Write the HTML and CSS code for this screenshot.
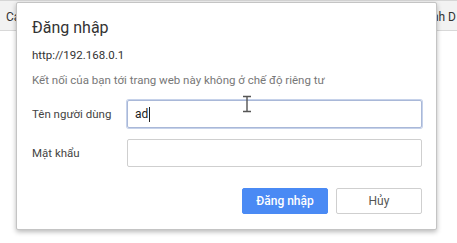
FILE: index.html
```html
<!DOCTYPE html>
<html lang="vi">

<head>
  <meta charset="utf8">
  <title>Đăng nhập</title>
  <link rel="stylesheet" href="styles.css">
</head>

<body>

  <div class="browser">
    <div class="tabbar">
      <span class="tab-left">Ca</span>
      <span class="tab-right">nh D</span>
    </div>
    <div class="page"></div>
  </div>

  <div class="auth-dialog">
    <h1 class="title">Đăng nhập</h1>
    <div class="origin">http://192.168.0.1</div>
    <div class="notice">Kết nối của bạn tới trang web này không ở chế độ riêng tư</div>

    <div class="fields">
      <label class="label">Tên người dùng</label>
      <div class="field focused">ad<span class="caret"></span></div>
      <label class="label">Mật khẩu</label>
      <div class="field"></div>
    </div>

    <div class="actions">
      <button class="btn primary">Đăng nhập</button>
      <button class="btn">Hủy</button>
    </div>
  </div>

  <!-- mouse pointer over the username field -->
  <svg class="ibeam" width="10" height="18" viewBox="0 0 10 18">
    <path d="M1 1.5 H9 M5 1.5 V16.5 M1 16.5 H9" stroke="#555" stroke-width="1.4" fill="none"></path>
  </svg>

</body>

</html>
```

FILE: styles.css
```css
* {
  box-sizing: border-box;
}

body {
  margin: 0;
  width: 457px;
  height: 243px;
  overflow: hidden;
  background-color: white;
  font-family: Roboto, "Noto Sans", sans-serif;
  color: #333;
}

.browser .tabbar {
  display: flex;
  justify-content: space-between;
  align-items: center;
  height: 31px;
  padding: 2px 0 0 6px;
  background-color: #f2f2f2;
  border-top: 1px solid #d6d6d6;
  border-bottom: 1px solid #d8d8d8;
  font-size: 12px;
  color: #333;
}

.browser .tabbar .tab-right {
  margin-right: 1px;
}

.auth-dialog {
  position: absolute;
  left: 16px;
  top: 2px;
  width: 421px;
  height: 228px;
  padding: 14px 14px 0 15px;
  background-color: white;
  border: 1px solid #c4c4c4;
  border-radius: 2px;
  box-shadow: 0 2px 5px rgba(0, 0, 0, .28);
}

.auth-dialog .title {
  margin: 0;
  font-size: 16px;
  font-weight: normal;
  line-height: 22px;
  color: #333;
}

.auth-dialog .origin {
  margin-top: 8px;
  font-size: 11.5px;
  line-height: 16px;
  color: #333;
}

.auth-dialog .notice {
  margin-top: 9px;
  font-size: 11.5px;
  line-height: 16px;
  color: #777;
}

.auth-dialog .fields {
  display: grid;
  grid-template-columns: 95px 1fr;
  row-gap: 11px;
  align-items: center;
  margin-top: 12px;
}

.auth-dialog .label {
  font-size: 11.5px;
  color: #444;
}

.auth-dialog .field {
  display: flex;
  align-items: center;
  height: 28px;
  padding: 0 7px;
  border: 1px solid #cfcfcf;
  border-radius: 2px;
  font-size: 12px;
  color: #222;
}

.auth-dialog .field.focused {
  border-color: #a9b8d8;
  box-shadow: 0 0 0 1px #c6d2ea;
}

.auth-dialog .field .caret {
  width: 1px;
  height: 15px;
  margin-left: 1px;
  background-color: #222;
}

.auth-dialog .actions {
  display: flex;
  justify-content: flex-end;
  column-gap: 8px;
  margin-top: 21px;
}

.auth-dialog .btn {
  width: 86px;
  height: 26px;
  border: 1px solid #cfcfcf;
  border-radius: 2px;
  background-color: white;
  font-family: inherit;
  font-size: 12px;
  color: #555;
}

.auth-dialog .btn.primary {
  border-color: #4a8af4;
  background-color: #4a8af4;
  color: white;
  font-weight: 500;
}

.ibeam {
  position: absolute;
  left: 242px;
  top: 95px;
}
```
